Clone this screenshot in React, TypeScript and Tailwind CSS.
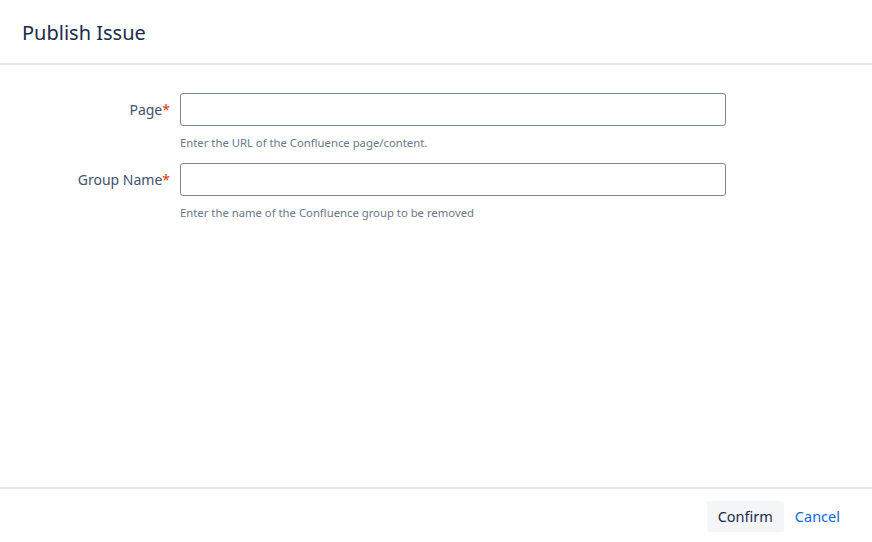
export default function App() {
  return (
    <div className="flex h-[542px] w-[872px] flex-col bg-white font-['Noto_Sans',_'Open_Sans',_sans-serif] text-[#172b4d]">
      {/* header */}
      <div className="flex h-[65px] shrink-0 items-center border-b-2 border-[#e4e6ea] px-[22px] pt-[2px]">
        <h2 className="text-[20px] font-normal leading-6 text-[#172b4d]">Publish Issue</h2>
      </div>

      {/* form */}
      <div className="flex-1 pt-[28px]">
        <Field label="Page" help="Enter the URL of the Confluence page/content." />
        <Field label="Group Name" help="Enter the name of the Confluence group to be removed" />
      </div>

      {/* footer */}
      <div className="flex h-[55px] shrink-0 items-start justify-end gap-[11px] border-t-2 border-[#e4e6ea] pr-[32px] pt-[12px]">
        <button className="h-[31px] rounded-[3px] bg-[#f4f5f7] px-[11px] text-[14.5px] text-[#172b4d]">
          Confirm
        </button>
        <button className="h-[31px] text-[14.5px] text-[#0c66e4]">Cancel</button>
      </div>
    </div>
  );
}

function Field({ label, help }: { label: string; help: string }) {
  return (
    <div className="mb-[12px] flex">
      <div className="w-[180px] shrink-0 pr-[10px] pt-[7px] text-right text-[14px] leading-5 text-[#42526e]">
        {label}
        <span className="text-[#de350b]">*</span>
      </div>
      <div className="w-[546px]">
        <input className="block h-[33px] w-full rounded-[3px] border border-[#7a869a] bg-white px-2 text-[14px] outline-none" />
        <p className="mt-[9px] text-[11.3px] leading-4 text-[#6b778c]">{help}</p>
      </div>
    </div>
  );
}
